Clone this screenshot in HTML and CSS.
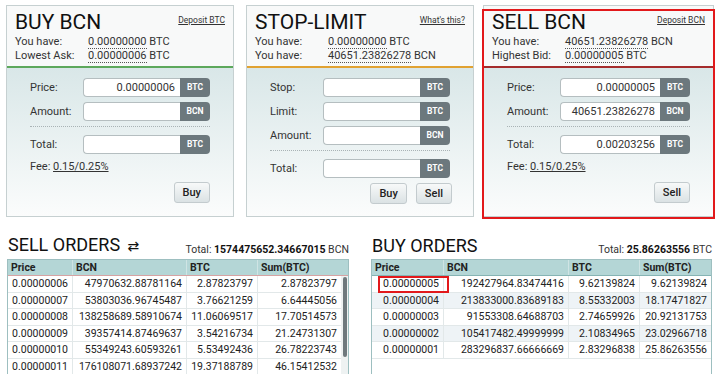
FILE: index.html
```html
<!DOCTYPE html>
<html lang="en">
<head>
  <meta charset="UTF-8" />
  <title>BCN/BTC Exchange</title>
  <link rel="stylesheet" href="styles.css">
</head>
<body>
  <div class="panels">
    <!-- Buy -->
    <div class="panel">
      <div class="panel-head buy">
        <div class="title-row">
          <h2>BUY BCN</h2>
          <a class="head-link">Deposit BTC</a>
        </div>
        <div class="info"><span class="info-label">You have:</span><span><span class="dotted">0.00000000</span> BTC</span></div>
        <div class="info"><span class="info-label">Lowest Ask:</span><span><span class="dotted">0.00000006</span> BTC</span></div>
      </div>
      <div class="panel-body">
        <div class="field"><label>Price:</label><div class="input-group"><div class="input">0.00000006</div><span class="addon">BTC</span></div></div>
        <div class="field"><label>Amount:</label><div class="input-group"><div class="input"></div><span class="addon">BCN</span></div></div>
        <div class="sep"></div>
        <div class="field"><label>Total:</label><div class="input-group"><div class="input"></div><span class="addon">BTC</span></div></div>
        <div class="fee">Fee: <u>0.15/0.25%</u></div>
        <div class="actions"><button>Buy</button></div>
      </div>
    </div>

    <!-- Stop-limit -->
    <div class="panel stop">
      <div class="panel-head stoplimit">
        <div class="title-row">
          <h2>STOP-LIMIT</h2>
          <a class="head-link">What's this?</a>
        </div>
        <div class="info"><span class="info-label">You have:</span><span><span class="dotted">0.00000000</span> BTC</span></div>
        <div class="info"><span class="info-label">You have:</span><span><span class="dotted">40651.23826278</span> BCN</span></div>
      </div>
      <div class="panel-body">
        <div class="field"><label>Stop:</label><div class="input-group"><div class="input"></div><span class="addon">BTC</span></div></div>
        <div class="field"><label>Limit:</label><div class="input-group"><div class="input"></div><span class="addon">BTC</span></div></div>
        <div class="field"><label>Amount:</label><div class="input-group"><div class="input"></div><span class="addon">BCN</span></div></div>
        <div class="sep"></div>
        <div class="field"><label>Total:</label><div class="input-group"><div class="input"></div><span class="addon">BTC</span></div></div>
        <div class="actions"><button>Buy</button><button>Sell</button></div>
      </div>
    </div>

    <!-- Sell -->
    <div class="panel sell highlighted">
      <div class="panel-head sellhead">
        <div class="title-row">
          <h2>SELL BCN</h2>
          <a class="head-link">Deposit BCN</a>
        </div>
        <div class="info"><span class="info-label">You have:</span><span><span class="dotted">40651.23826278</span> BCN</span></div>
        <div class="info"><span class="info-label">Highest Bid:</span><span><span class="dotted">0.00000005</span> BTC</span></div>
      </div>
      <div class="panel-body">
        <div class="field"><label>Price:</label><div class="input-group"><div class="input">0.00000005</div><span class="addon">BTC</span></div></div>
        <div class="field"><label>Amount:</label><div class="input-group"><div class="input">40651.23826278</div><span class="addon">BCN</span></div></div>
        <div class="sep"></div>
        <div class="field"><label>Total:</label><div class="input-group"><div class="input">0.00203256</div><span class="addon">BTC</span></div></div>
        <div class="fee">Fee: <u>0.15/0.25%</u></div>
        <div class="actions"><button>Sell</button></div>
      </div>
    </div>
  </div>

  <div class="orders">
    <!-- Sell orders -->
    <div class="book-col sell-col">
      <div class="book-title">
        <h3>SELL ORDERS <span class="swap">&#8644;</span></h3>
        <div class="book-total">Total: <b>1574475652.34667015</b> BCN</div>
      </div>
      <div class="book sell-book">
        <div class="book-head"><span>Price</span><span>BCN</span><span>BTC</span><span>Sum(BTC)</span></div>
        <div class="book-body">
          <div class="rows">
            <div class="row"><span>0.00000006</span><span>47970632.88781164</span><span>2.87823797</span><span>2.87823797</span></div>
            <div class="row"><span>0.00000007</span><span>53803036.96745487</span><span>3.76621259</span><span>6.64445056</span></div>
            <div class="row"><span>0.00000008</span><span>138258689.58910674</span><span>11.06069517</span><span>17.70514573</span></div>
            <div class="row"><span>0.00000009</span><span>39357414.87469637</span><span>3.54216734</span><span>21.24731307</span></div>
            <div class="row"><span>0.00000010</span><span>55349243.60593261</span><span>5.53492436</span><span>26.78223743</span></div>
            <div class="row"><span>0.00000011</span><span>176108071.68937242</span><span>19.37188789</span><span>46.15412532</span></div>
          </div>
          <div class="scrollbar"><div class="thumb"></div></div>
        </div>
      </div>
    </div>

    <!-- Buy orders -->
    <div class="book-col buy-col">
      <div class="book-title">
        <h3>BUY ORDERS</h3>
        <div class="book-total">Total: <b>25.86263556</b> BTC</div>
      </div>
      <div class="book buy-book">
        <div class="book-head"><span>Price</span><span>BCN</span><span>BTC</span><span>Sum(BTC)</span></div>
        <div class="rows">
          <div class="row"><span class="marked">0.00000005</span><span>192427964.83474416</span><span>9.62139824</span><span>9.62139824</span></div>
          <div class="row"><span>0.00000004</span><span>213833000.83689183</span><span>8.55332003</span><span>18.17471827</span></div>
          <div class="row"><span>0.00000003</span><span>91553308.64688703</span><span>2.74659926</span><span>20.92131753</span></div>
          <div class="row"><span>0.00000002</span><span>105417482.49999999</span><span>2.10834965</span><span>23.02966718</span></div>
          <div class="row"><span>0.00000001</span><span>283296837.66666669</span><span>2.83296838</span><span>25.86263556</span></div>
        </div>
      </div>
    </div>
  </div>
</body>
</html>
```

FILE: styles.css
```css
:root {
  --text: #222;
  --label: #333;
  --panel-border: #c6d0d1;
  --grid: #e2e8e9;
  --head-bg: #b4d6d6;
  --addon: #6c787d;
}

* { box-sizing: border-box; margin: 0; padding: 0; }
html, body { height: 100%; overflow: hidden; }
body {
  background: #fff;
  color: var(--text);
  font-family: Roboto, "Liberation Sans", Arial, sans-serif;
  font-size: 11px;
}

/* top panels */
.panels {
  display: flex;
  padding: 5px 0 0 6px;
}
.panel {
  width: 228px;
  height: 212px;
  border: 1px solid var(--panel-border);
  display: flex;
  flex-direction: column;
}
.panel.stop { margin-left: 12px; }
.panel.sell { margin-left: 9px; width: 231px; }
.panel.highlighted { position: relative; }
.panel.highlighted::after {
  content: "";
  position: absolute;
  top: 3px;
  left: -2px;
  right: -2px;
  bottom: -3px;
  border: 2px solid #e2191b;
  pointer-events: none;
}

.panel-head {
  background: #f8f9f9;
  padding: 4px 8px 3px 8px;
  border-bottom: 2px solid #5da85c;
}
.panel-head.stoplimit { border-bottom-color: #e1a232; }
.panel-head.sellhead { border-bottom-color: #a52c2c; }

.title-row {
  display: flex;
  justify-content: space-between;
  align-items: center;
  height: 25px;
}
h2 {
  font-size: 21px;
  font-weight: 400;
  color: #111;
  line-height: 23px;
}
.head-link {
  font-size: 8.5px;
  color: #333;
  text-decoration: underline;
  margin-top: -6px;
}
.info {
  display: flex;
  line-height: 14px;
  color: var(--label);
}
.info-label { width: 73px; }
.dotted { border-bottom: 1px dotted #555; }

.panel-body {
  flex: 1;
  padding: 10px 23px 10px 23px;
  background: linear-gradient(#d9e7e8, #fbfcfc);
}
.field {
  display: flex;
  align-items: center;
  height: 19px;
  margin-bottom: 5px;
}
.field label {
  width: 53px;
  color: var(--label);
}
.input-group {
  flex: 1;
  display: flex;
  height: 19px;
}
.input {
  flex: 1;
  background: #fff;
  border: 1px solid #b5bec0;
  border-right: none;
  border-radius: 4px 0 0 4px;
  text-align: right;
  padding-right: 5px;
  line-height: 17px;
  font-size: 11px;
  color: #333;
}
.addon {
  width: 30px;
  background: var(--addon);
  color: #fff;
  font-size: 8.5px;
  font-weight: 700;
  text-align: center;
  line-height: 19px;
  border-radius: 0 4px 4px 0;
}
.sep {
  border-top: 1px dotted #a9b3b5;
  margin: 2px 0 8px;
}
.fee {
  margin-top: 2px;
  line-height: 16px;
  color: var(--label);
}
.fee u { text-underline-offset: 1px; }
.actions {
  display: flex;
  justify-content: flex-end;
  gap: 9px;
  margin-top: 7px;
}
.stop .actions { margin-top: 0; margin-right: -2px; }
button {
  height: 21px;
  min-width: 35px;
  padding: 0 8px;
  font-family: inherit;
  font-size: 11px;
  font-weight: 500;
  color: #222;
  border: 1px solid #c3cbce;
  border-radius: 3px;
  background: linear-gradient(#f7f9f9, #dbe2e4);
}

/* order books */
.orders {
  display: flex;
  padding-left: 7px;
  margin-top: 16px;
}
.book-col { width: 342px; }
.buy-col { margin-left: 22px; width: 341px; }
.book-title {
  display: flex;
  justify-content: space-between;
  align-items: flex-end;
  height: 26px;
  padding: 0 0 2px 1px;
}
h3 {
  font-size: 18px;
  font-weight: 400;
  color: #111;
  line-height: 22px;
}
.swap {
  font-family: "DejaVu Sans", sans-serif;
  font-size: 14px;
  margin-left: 3px;
}
.book-total {
  font-size: 10.5px;
  color: #333;
  line-height: 14px;
}
.book-total b { font-weight: 700; color: #111; }

.book {
  border: 1px solid #9dbfc0;
  border-bottom: none;
  height: 116px;
  overflow: hidden;
}
.book-head, .row {
  display: grid;
}
.sell-book .book-head { grid-template-columns: 64px 114px 71px 1fr; }
.sell-book .row { grid-template-columns: 64px 114px 71px 1fr; }
.buy-book .book-head, .buy-book .row { grid-template-columns: 71px 125px 71px 1fr; }

.book-head {
  background: var(--head-bg);
  height: 16px;
  line-height: 15px;
  font-weight: 700;
  font-size: 10.5px;
  border-bottom: 1px solid #d6a3a3;
}
.buy-book .book-head { border-bottom-color: #86b4b4; }
.book-head span {
  padding-left: 3px;
  border-left: 1px solid #cfe4e4;
}
.book-head span:first-child { border-left: none; }

.book-body { display: flex; }
.rows { flex: 1; }
.row {
  height: 16.6px;
  line-height: 16px;
  border-bottom: 1px solid var(--grid);
  font-size: 10.5px;
}
.row span {
  text-align: right;
  padding-right: 4px;
  border-left: 1px solid var(--grid);
}
.row span:first-child { border-left: none; }
.buy-book .row:nth-child(even) { background: #eef3f6; }

.scrollbar {
  width: 7px;
  background: #eef2f2;
  padding: 1px 1px 0 2px;
}
.thumb {
  height: 80px;
  background: #6f797d;
  border-radius: 2px;
}

.marked { position: relative; }
.marked::after {
  content: "";
  position: absolute;
  top: 0;
  left: 6px;
  right: -6px;
  bottom: -1px;
  border: 2px solid #e2191b;
}
```
